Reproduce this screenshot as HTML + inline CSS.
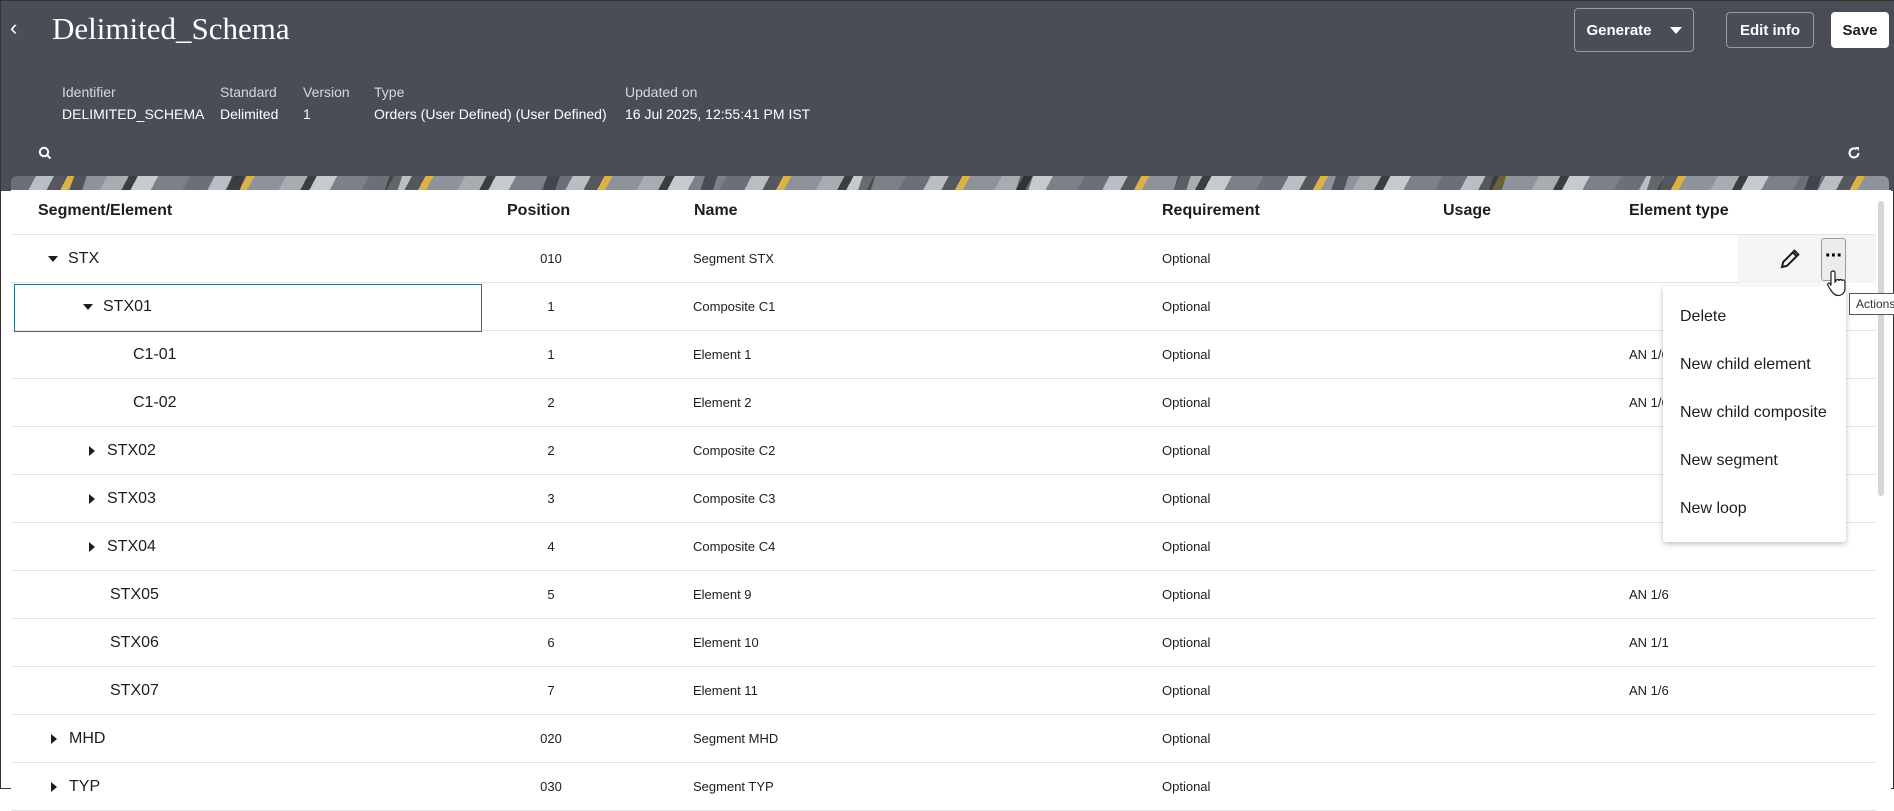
<!DOCTYPE html>
<html><head><meta charset="utf-8"><style>
*{box-sizing:border-box;margin:0;padding:0}
body{width:1894px;height:789px;overflow:hidden;background:#fff;font-family:"Liberation Sans",sans-serif;position:relative;border:1px solid #333}
.hdr{position:absolute;left:0;top:0;width:1894px;height:190px;background:#4a4d55;color:#fff}
.title{position:absolute;left:51px;top:10px;font-family:"Liberation Serif",serif;font-size:31px;color:#fff}
.back{position:absolute;left:9px;top:14px;font-size:22px;color:#fff}
.btn{position:absolute;border:1px solid #9a9ca1;border-radius:4px;color:#fff;font-size:15px;font-weight:bold;display:flex;align-items:center;justify-content:center}
.meta{position:absolute;font-size:14px}
.meta .l{color:#d6d7da}
.meta .v{margin-top:6px;color:#fff}
.banner{position:absolute;left:10px;top:175px;width:1878px;height:14px;border-radius:6px 6px 0 0;background:
repeating-linear-gradient(108deg,transparent 0 60px,rgba(40,42,46,.6) 60px 72px,transparent 72px 150px),
repeating-linear-gradient(118deg,#6a6f78 0 22px,#b9bdc4 22px 38px,#54575e 38px 50px,#d9b444 50px 57px,#8e939b 57px 85px,#a7abb2 85px 104px,#3b3d42 104px 112px,#c6c9ce 112px 130px,#7b8089 130px 158px)}
.card{position:absolute;left:10px;top:189px;width:1880px;height:600px;background:#fff}
.th{position:absolute;top:201px;font-size:16px;font-weight:bold;color:#1d1d1d}
.row{position:absolute;left:10px;width:1865px;height:48px;border-bottom:1px solid #e4e4e4}
.c{position:absolute;top:0;line-height:48px;color:#1d1d1d}
.seg{font-size:16px}
.sm{font-size:13px}
.tri{display:inline-block;width:0;height:0;border-left:5px solid transparent;border-right:5px solid transparent;border-top:6px solid #1d1d1d;margin-right:10px;vertical-align:middle}
.trr{display:inline-block;width:0;height:0;border-top:5px solid transparent;border-bottom:5px solid transparent;border-left:6px solid #1d1d1d;margin-right:12px;vertical-align:middle}
.menu{position:absolute;left:1662px;top:285px;width:183px;height:256px;background:#fff;box-shadow:0 2px 6px rgba(0,0,0,.25);border-radius:3px}
.mi{position:absolute;left:17px;font-size:16px;color:#1d1d1d}
</style></head><body>
<div class="hdr">
<div class="back">&#8249;</div>
<div class="title">Delimited_Schema</div>
<div class="btn" style="left:1573px;top:7px;width:120px;height:44px">Generate <span style="margin-left:18px;border-left:6px solid transparent;border-right:6px solid transparent;border-top:7px solid #fff;width:0;height:0"></span></div>
<div class="btn" style="left:1725px;top:11px;width:88px;height:36px">Edit info</div>
<div class="btn" style="left:1830px;top:11px;width:58px;height:36px;background:#fff;color:#1d1d1d;border-color:#fff">Save</div>
<div class="meta" style="left:61px;top:83px"><div class="l">Identifier</div><div class="v">DELIMITED_SCHEMA</div></div>
<div class="meta" style="left:219px;top:83px"><div class="l">Standard</div><div class="v">Delimited</div></div>
<div class="meta" style="left:302px;top:83px"><div class="l">Version</div><div class="v">1</div></div>
<div class="meta" style="left:373px;top:83px"><div class="l">Type</div><div class="v">Orders (User Defined) (User Defined)</div></div>
<div class="meta" style="left:624px;top:83px"><div class="l">Updated on</div><div class="v">16 Jul 2025, 12:55:41 PM IST</div></div>
<svg style="position:absolute;left:37px;top:145px" width="14" height="14" viewBox="0 0 14 14"><circle cx="6" cy="6" r="4.2" fill="none" stroke="#fff" stroke-width="2"/><path d="M9 9l3.5 3.5" stroke="#fff" stroke-width="2"/></svg>
<svg style="position:absolute;left:1846px;top:145px" width="14" height="14" viewBox="0 0 14 14"><path d="M11.5 7A4.5 4.5 0 1 1 9.5 3.2" fill="none" stroke="#fff" stroke-width="2"/><path d="M8 1h4v4z" fill="#fff"/></svg>
</div>
<div class="banner"></div>
<div class="card"></div>
<div class="row" style="top:186px;height:48px"></div>
<div class="th" style="left:37px">Segment/Element</div>
<div class="th" style="left:506px">Position</div>
<div class="th" style="left:693px">Name</div>
<div class="th" style="left:1161px">Requirement</div>
<div class="th" style="left:1442px">Usage</div>
<div class="th" style="left:1628px">Element type</div>

<div class="row" style="top:234px"><div class="c seg" style="left:37px"><span class="tri"></span>STX</div><div class="c sm" style="left:500px;width:80px;text-align:center">010</div><div class="c sm" style="left:682px">Segment STX</div><div class="c sm" style="left:1151px">Optional</div>
<div style="position:absolute;left:1727px;top:0;width:138px;height:48px;background:#f4f4f4"></div>
<svg style="position:absolute;left:1767px;top:12px" width="24" height="24" viewBox="0 0 24 24"><path d="M4 20l1.2-5L16.5 3.7l3.8 3.8L9 18.8z M14.8 5.4l3.8 3.8" fill="none" stroke="#1d1d1d" stroke-width="2"/></svg>
<div style="position:absolute;left:1810px;top:3px;width:25px;height:43px;border:1px solid #9a9a9a;border-radius:3px;background:#ececec;font-weight:bold;font-size:20px;text-align:center;line-height:34px;letter-spacing:-1px">&middot;&middot;&middot;</div>
</div>
<div class="row" style="top:282px"><div class="c seg" style="left:72px"><span class="tri"></span>STX01</div><div class="c sm" style="left:500px;width:80px;text-align:center">1</div><div class="c sm" style="left:682px">Composite C1</div><div class="c sm" style="left:1151px">Optional</div></div>
<div style="position:absolute;left:13px;top:283px;width:468px;height:48px;border:1px solid #2a6f8f"></div>
<div class="row" style="top:330px"><div class="c seg" style="left:122px">C1-01</div><div class="c sm" style="left:500px;width:80px;text-align:center">1</div><div class="c sm" style="left:682px">Element 1</div><div class="c sm" style="left:1151px">Optional</div><div class="c sm" style="left:1618px">AN 1/6</div></div>
<div class="row" style="top:378px"><div class="c seg" style="left:122px">C1-02</div><div class="c sm" style="left:500px;width:80px;text-align:center">2</div><div class="c sm" style="left:682px">Element 2</div><div class="c sm" style="left:1151px">Optional</div><div class="c sm" style="left:1618px">AN 1/6</div></div>
<div class="row" style="top:426px"><div class="c seg" style="left:78px"><span class="trr"></span>STX02</div><div class="c sm" style="left:500px;width:80px;text-align:center">2</div><div class="c sm" style="left:682px">Composite C2</div><div class="c sm" style="left:1151px">Optional</div></div>
<div class="row" style="top:474px"><div class="c seg" style="left:78px"><span class="trr"></span>STX03</div><div class="c sm" style="left:500px;width:80px;text-align:center">3</div><div class="c sm" style="left:682px">Composite C3</div><div class="c sm" style="left:1151px">Optional</div></div>
<div class="row" style="top:522px"><div class="c seg" style="left:78px"><span class="trr"></span>STX04</div><div class="c sm" style="left:500px;width:80px;text-align:center">4</div><div class="c sm" style="left:682px">Composite C4</div><div class="c sm" style="left:1151px">Optional</div></div>
<div class="row" style="top:570px"><div class="c seg" style="left:99px">STX05</div><div class="c sm" style="left:500px;width:80px;text-align:center">5</div><div class="c sm" style="left:682px">Element 9</div><div class="c sm" style="left:1151px">Optional</div><div class="c sm" style="left:1618px">AN 1/6</div></div>
<div class="row" style="top:618px"><div class="c seg" style="left:99px">STX06</div><div class="c sm" style="left:500px;width:80px;text-align:center">6</div><div class="c sm" style="left:682px">Element 10</div><div class="c sm" style="left:1151px">Optional</div><div class="c sm" style="left:1618px">AN 1/1</div></div>
<div class="row" style="top:666px"><div class="c seg" style="left:99px">STX07</div><div class="c sm" style="left:500px;width:80px;text-align:center">7</div><div class="c sm" style="left:682px">Element 11</div><div class="c sm" style="left:1151px">Optional</div><div class="c sm" style="left:1618px">AN 1/6</div></div>
<div class="row" style="top:714px"><div class="c seg" style="left:40px"><span class="trr"></span>MHD</div><div class="c sm" style="left:500px;width:80px;text-align:center">020</div><div class="c sm" style="left:682px">Segment MHD</div><div class="c sm" style="left:1151px">Optional</div></div>
<div class="row" style="top:762px"><div class="c seg" style="left:40px"><span class="trr"></span>TYP</div><div class="c sm" style="left:500px;width:80px;text-align:center">030</div><div class="c sm" style="left:682px">Segment TYP</div><div class="c sm" style="left:1151px">Optional</div></div>

<div style="position:absolute;left:1877px;top:200px;width:6px;height:295px;background:#d6d6d6;border-radius:3px"></div>
<div class="menu">
<div class="mi" style="top:22px">Delete</div>
<div class="mi" style="top:70px">New child element</div>
<div class="mi" style="top:118px">New child composite</div>
<div class="mi" style="top:166px">New segment</div>
<div class="mi" style="top:214px">New loop</div>
</div>
<div style="position:absolute;left:1848px;top:292px;width:50px;height:22px;border:1px solid #555;background:#fff;font-size:12px;line-height:20px;padding-left:6px;color:#333">Actions</div>
<svg style="position:absolute;left:1826px;top:268px" width="22" height="28" viewBox="0 0 22 28"><path d="M6 2c1.5 0 2 1 2 2v9l1-1c0-2 3-2 3 0 0-2 3-2 3 0 0-1.5 3-1.5 3 .5v7c0 4-3 7-7 7-3 0-5-2-7-5l-3-5c-1-2 1-3 2-2l1 2V4c0-1 .5-2 2-2z" fill="#fff" stroke="#1d1d1d" stroke-width="1.2"/></svg>
</body></html>
